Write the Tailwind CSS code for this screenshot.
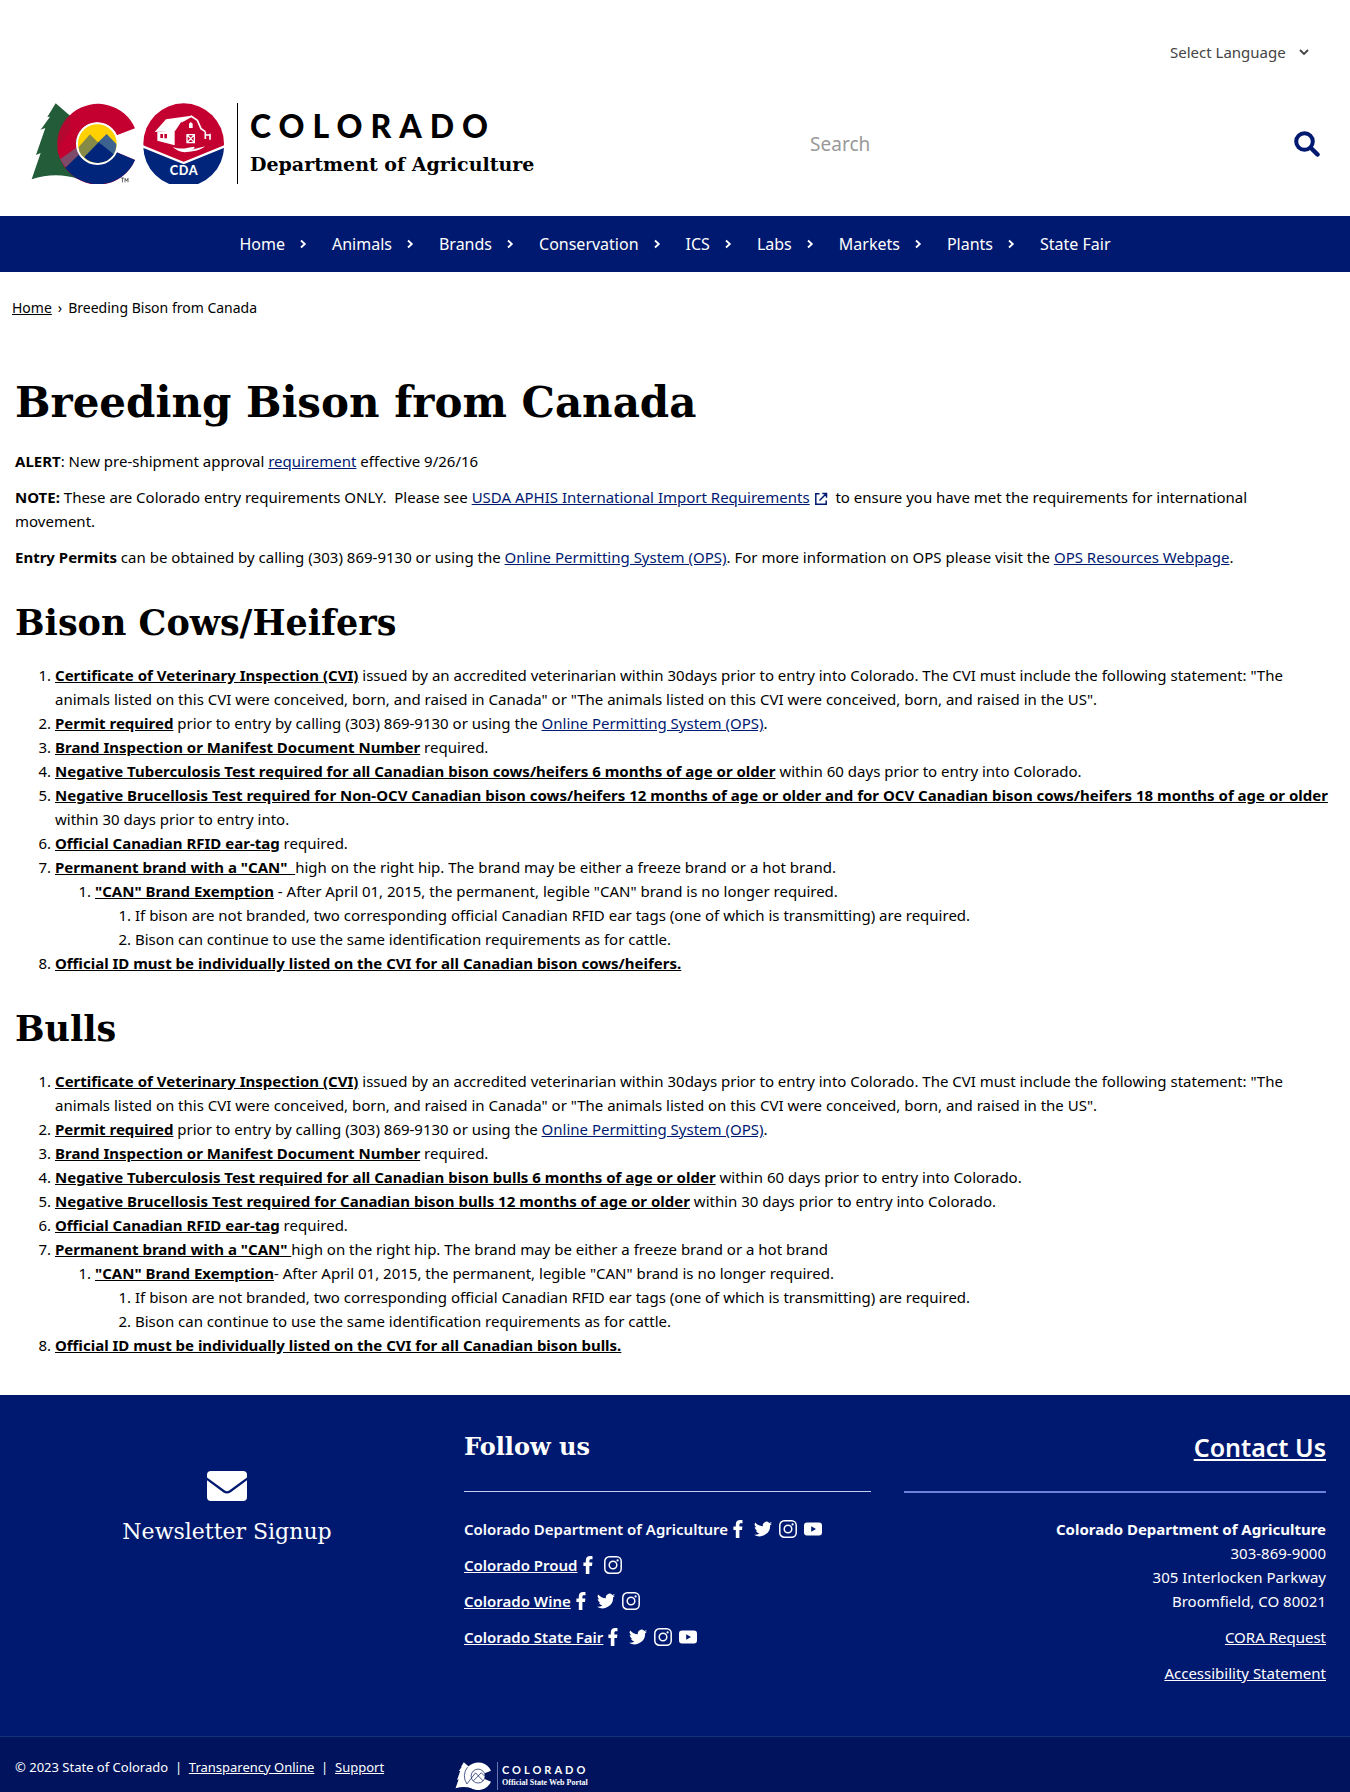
<!DOCTYPE html>
<html lang="en">
<head>
<meta charset="utf-8">
<meta name="viewport" content="width=device-width, initial-scale=1">
<title>Breeding Bison from Canada | Department of Agriculture</title>
<script src="https://cdn.jsdelivr.net/npm/@tailwindcss/browser@4"></script>
</head>
<body class="bg-white text-black font-['Noto_Sans',sans-serif] text-[15px] leading-6">

<!-- Shared icons -->
<svg class="hidden" aria-hidden="true">
  <symbol id="chev" viewBox="0 0 8 10"><path d="M2 1.5 5.8 5 2 8.5" fill="none" stroke="currentColor" stroke-width="1.8"/></symbol>
  <symbol id="fb" viewBox="0 0 18 18"><path d="M6.800 18V10H4.400V6.600h2.400V4.400C6.800 1.600 8.600.1 11.200.1c1.100 0 2 .1 2.300.1v3.100h-1.600c-1.200 0-1.500.6-1.500 1.500v1.800h3l-.4 3.400h-2.600V18z" fill="currentColor"/></symbol>
  <symbol id="tw" viewBox="0 0 24 24"><path d="M24 4.6c-.9.4-1.8.7-2.8.8 1-.6 1.8-1.6 2.2-2.7-1 .6-2 1-3.1 1.2a4.9 4.9 0 0 0-8.4 4.5C7.7 8.200 4.100 6.200 1.700 3.200a4.900 4.900 0 0 0 1.500 6.600c-.8 0-1.600-.2-2.200-.6v.1c0 2.400 1.700 4.400 3.900 4.800-.7.2-1.500.2-2.200.1.600 2 2.400 3.400 4.600 3.400A9.900 9.900 0 0 1 0 19.500 14 14 0 0 0 21.500 7.100c1-.7 1.800-1.600 2.500-2.500z" fill="currentColor"/></symbol>
  <symbol id="ig" viewBox="0 0 18 18"><rect x=".8" y=".8" width="16.400" height="16.400" rx="4.500" fill="none" stroke="currentColor" stroke-width="1.500"/><circle cx="9" cy="9" r="3.800" fill="none" stroke="currentColor" stroke-width="1.500"/><circle cx="13.600" cy="4.400" r="1.100" fill="currentColor"/></symbol>
  <symbol id="yt" viewBox="0 0 18 18"><path fill-rule="evenodd" d="M3 2.500h12a3 3 0 0 1 3 3v7a3 3 0 0 1-3 3H3a3 3 0 0 1-3-3v-7a3 3 0 0 1 3-3zM7.200 6.300v5.400L12 9z" fill="currentColor"/></symbol>
</svg>

<header class="pt-10">
  <div class="flex justify-end pr-10">
    <div class="relative flex items-center">
      <select aria-label="Select Language" class="appearance-none bg-transparent pr-6 leading-6 text-[#444]"><option>Select Language</option></select>
      <svg class="pointer-events-none absolute right-0 h-3 w-3 text-[#444]" viewBox="0 0 12 12"><path d="M2 4l4 4 4-4" fill="none" stroke="currentColor" stroke-width="1.800"/></svg>
    </div>
  </div>
  <div class="mt-[39px] flex items-center pb-8 pl-[30px] pr-[30px]">
    <a href="#" class="flex items-center" aria-label="Colorado Department of Agriculture">
      <svg class="h-[81px] w-[195px]" viewBox="30 26 585 243">
        <path d="M107 27 82 68l8-1-28 39 14-5-28 81 14-6-27 79q72-24 140-1l10-160z" fill="#235c39"/>
        <path d="M345 102A121 121 0 1 0 345 197L290 174A64 64 0 1 1 290 123Z" fill="#c3002f"/>
        <path d="M140 70A121 121 0 0 0 112 165L150 110 152 62z" fill="#a80f33" opacity=".5"/>
        <path d="M112 166 172 150 186 190 134 217A121 121 0 0 1 114 176z" fill="#c3002f"/>
        <path d="M120 195 176 155 190 195 136 219z" fill="#7d4a6a"/>
        <path d="M136 220 182 176Q232 240 290 174L345 197A121 121 0 0 1 136 220z" fill="#00257a"/>
        <circle cx="232" cy="148" r="61" fill="#ffd100" stroke="#fff" stroke-width="6"/>
        <path d="M176 158 210 120 238 148 220 180 190 188Q176 175 176 158z" fill="#858b47"/>
        <path d="M232 146 260 119 289 149Q290 170 276 186L240 170z" fill="#3c628f"/>
        <path d="M192 189 236 144 281 180A58 58 0 0 1 192 189z" fill="#00257a"/>
        <path d="M303 251h9m-4.500 0v13M315 264v-12l4.500 8 4.500-8v12" fill="none" stroke="#222" stroke-width="2"/>
        <circle cx="491" cy="148" r="121" fill="#c3002f"/>
        <path d="M370 156 491 206 612 156A121 121 0 0 1 370 156z" fill="#00257a"/>
        <path d="M368 156 491 206 614 156" fill="none" stroke="#fff" stroke-width="7"/>
        <path d="M438 75 514 64 484 82 466 109 404 113 412 104z" fill="#fff"/>
        <path d="M412 113 464 107v46l-52-14z" fill="#fff"/>
        <path d="M421 119h8v12h-8zm12 0h8v13h-8z" fill="#c3002f"/>
        <path d="M484 82 514 66 532 78 543 103 556 112M556 134v-22M556 122h14M570 118v18" fill="none" stroke="#fff" stroke-width="5"/>
        <path d="M507 101V88l5-5 6 5v13z" fill="#fff"/>
        <path d="M501 121h22v24h-22zM501 121l22 24m0-24-22 24" fill="none" stroke="#fff" stroke-width="4"/>
        <path d="M458 158q22 8 46 2l18-3q6 4-8 9l42-10q-20 16-62 18-20-2-36-16z" fill="#fff"/>
        <text x="492" y="243" text-anchor="middle" class="fill-white font-[Lato,sans-serif] text-[38px] font-black tracking-[2px]">CDA</text>
      </svg>
      <span class="ml-3 block h-[81px] w-px bg-black"></span>
      <span class="ml-3 flex flex-col gap-2 whitespace-nowrap">
        <span class="font-[Lato,sans-serif] text-[32px] font-black leading-8 tracking-[8px]">COLORADO</span>
        <span class="font-['DejaVu_Serif',serif] text-[19px] font-bold leading-7">Department of Agriculture</span>
      </span>
    </a>
    <form class="ml-auto flex w-[41%] items-center" role="search">
      <input type="search" aria-label="Search" placeholder="Search" class="h-10 min-w-0 flex-1 bg-transparent pl-[19px] text-[19px] placeholder:text-[#999]">
      <button type="submit" aria-label="Search" class="text-[#001970]">
        <svg class="h-[26px] w-[26px]" viewBox="0 0 26 26"><circle cx="10.500" cy="10.500" r="8.300" fill="none" stroke="currentColor" stroke-width="4"/><path d="m17 17 6.500 6.500" stroke="currentColor" stroke-width="4.500" stroke-linecap="round"/></svg>
      </button>
    </form>
  </div>
</header>

<nav class="bg-[#001970] text-base text-white" aria-label="Main">
  <ul class="flex h-14 items-center justify-center gap-[25px] whitespace-nowrap">
    <li class="flex items-center gap-[14px]"><a href="#">Home</a><svg class="h-[10px] w-2"><use href="#chev"/></svg></li>
    <li class="flex items-center gap-[14px]"><a href="#">Animals</a><svg class="h-[10px] w-2"><use href="#chev"/></svg></li>
    <li class="flex items-center gap-[14px]"><a href="#">Brands</a><svg class="h-[10px] w-2"><use href="#chev"/></svg></li>
    <li class="flex items-center gap-[14px]"><a href="#">Conservation</a><svg class="h-[10px] w-2"><use href="#chev"/></svg></li>
    <li class="flex items-center gap-[14px]"><a href="#">ICS</a><svg class="h-[10px] w-2"><use href="#chev"/></svg></li>
    <li class="flex items-center gap-[14px]"><a href="#">Labs</a><svg class="h-[10px] w-2"><use href="#chev"/></svg></li>
    <li class="flex items-center gap-[14px]"><a href="#">Markets</a><svg class="h-[10px] w-2"><use href="#chev"/></svg></li>
    <li class="flex items-center gap-[14px]"><a href="#">Plants</a><svg class="h-[10px] w-2"><use href="#chev"/></svg></li>
    <li><a href="#">State Fair</a></li>
  </ul>
</nav>

<nav class="px-3 pt-6 text-sm leading-6" aria-label="Breadcrumb">
  <a href="#" class="underline">Home</a><span class="px-1.5">›</span><span>Breeding Bison from Canada</span>
</nav>

<main class="px-[15px] pb-[38px] pt-[55px]">
  <h1 class="font-['DejaVu_Serif',serif] text-[42px] font-bold leading-[56px]">Breeding Bison from Canada</h1>
  <div class="mt-[18px] flex flex-col gap-3">
    <p><strong>ALERT</strong>: New pre-shipment approval <a href="#" class="text-[#001970] underline">requirement</a> effective 9/26/16</p>
    <p><strong>NOTE:</strong> These are Colorado entry requirements ONLY.&nbsp; Please see <a href="#" class="text-[#001970] underline">USDA APHIS International Import Requirements</a> <svg class="inline-block h-[14px] w-[14px] align-[-3px] text-[#001970]" viewBox="0 0 14 14"><path d="M5.500 1.800H1.800v10.400h10.400V8.500M8.300 1.500h4.200v4.200M12.200 1.800 5.500 8.500" fill="none" stroke="currentColor" stroke-width="1.500"/></svg>&nbsp; to ensure you have met the requirements for international<br>movement.</p>
    <p><strong>Entry Permits</strong> can be obtained by calling (303) 869-9130 or using the <a href="#" class="text-[#001970] underline">Online Permitting System (OPS)</a>. For more information on OPS please visit the <a href="#" class="text-[#001970] underline">OPS Resources Webpage</a>.</p>
  </div>

  <h2 class="mt-[30px] font-['DejaVu_Serif',serif] text-[35px] font-bold leading-[48px]">Bison Cows/Heifers</h2>
  <ol class="mt-4 list-decimal pl-10">
    <li><strong class="underline">Certificate of Veterinary Inspection (CVI)</strong> issued by an accredited veterinarian within 30days prior to entry into Colorado. The CVI must include the following statement: "The<br>animals listed on this CVI were conceived, born, and raised in Canada" or "The animals listed on this CVI were conceived, born, and raised in the US".</li>
    <li><strong class="underline">Permit required</strong> prior to entry by calling (303) 869-9130 or using the <a href="#" class="text-[#001970] underline">Online Permitting System (OPS)</a>.</li>
    <li><strong class="underline">Brand Inspection or Manifest Document Number</strong> required.</li>
    <li><strong class="underline">Negative Tuberculosis Test required for all Canadian bison cows/heifers 6 months of age or older</strong> within 60 days prior to entry into Colorado.</li>
    <li><strong class="underline">Negative Brucellosis Test required for Non-OCV Canadian bison cows/heifers 12 months of age or older and for OCV Canadian bison cows/heifers 18 months of age or older</strong> within 30 days prior to entry into.</li>
    <li><strong class="underline">Official Canadian RFID ear-tag</strong> required.</li>
    <li><strong class="underline">Permanent brand with a "CAN"&nbsp; </strong>high on the right hip. The brand may be either a freeze brand or a hot brand.
      <ol class="list-decimal pl-10">
        <li><strong class="underline">"CAN" Brand Exemption</strong> - After April 01, 2015, the permanent, legible "CAN" brand is no longer required.
          <ol class="list-decimal pl-10">
            <li>If bison are not branded, two corresponding official Canadian RFID ear tags (one of which is transmitting) are required.</li>
            <li>Bison can continue to use the same identification requirements as for cattle.</li>
          </ol>
        </li>
      </ol>
    </li>
    <li><strong class="underline">Official ID must be individually listed on the CVI for all Canadian bison cows/heifers.</strong></li>
  </ol>

  <h2 class="mt-[30px] font-['DejaVu_Serif',serif] text-[35px] font-bold leading-[48px]">Bulls</h2>
  <ol class="mt-4 list-decimal pl-10">
    <li><strong class="underline">Certificate of Veterinary Inspection (CVI)</strong> issued by an accredited veterinarian within 30days prior to entry into Colorado. The CVI must include the following statement: "The<br>animals listed on this CVI were conceived, born, and raised in Canada" or "The animals listed on this CVI were conceived, born, and raised in the US".</li>
    <li><strong class="underline">Permit required</strong> prior to entry by calling (303) 869-9130 or using the <a href="#" class="text-[#001970] underline">Online Permitting System (OPS)</a>.</li>
    <li><strong class="underline">Brand Inspection or Manifest Document Number</strong> required.</li>
    <li><strong class="underline">Negative Tuberculosis Test required for all Canadian bison bulls 6 months of age or older</strong> within 60 days prior to entry into Colorado.</li>
    <li><strong class="underline">Negative Brucellosis Test required for Canadian bison bulls 12 months of age or older</strong> within 30 days prior to entry into Colorado.</li>
    <li><strong class="underline">Official Canadian RFID ear-tag</strong> required.</li>
    <li><strong class="underline">Permanent brand with a "CAN" </strong>high on the right hip. The brand may be either a freeze brand or a hot brand
      <ol class="list-decimal pl-10">
        <li><strong class="underline">"CAN" Brand Exemption</strong>- After April 01, 2015, the permanent, legible "CAN" brand is no longer required.
          <ol class="list-decimal pl-10">
            <li>If bison are not branded, two corresponding official Canadian RFID ear tags (one of which is transmitting) are required.</li>
            <li>Bison can continue to use the same identification requirements as for cattle.</li>
          </ol>
        </li>
      </ol>
    </li>
    <li><strong class="underline">Official ID must be individually listed on the CVI for all Canadian bison bulls.</strong></li>
  </ol>
</main>

<footer class="bg-[#001970] text-white">
  <div class="grid grid-cols-3 pb-[51px] pt-8">
    <div class="flex flex-col items-center pl-1 pt-11">
      <svg class="h-[30px] w-10" viewBox="0 0 40 30"><path d="M4 0h32a4 4 0 0 1 4 4v2.500L22.500 19.300q-2.500 1.800-5 0L0 6.500V4a4 4 0 0 1 4-4z" fill="#fff"/><path d="M0 9.300 16.200 21.300q3.800 2.600 7.600 0L40 9.300V26a4 4 0 0 1-4 4H4a4 4 0 0 1-4-4z" fill="#fff"/></svg>
      <a href="#" class="mt-[13px] font-['DejaVu_Serif',serif] text-[22px] leading-9">Newsletter Signup</a>
    </div>
    <div class="pl-[14px] pr-[29px]">
      <h3 class="font-['DejaVu_Serif',serif] text-2xl font-bold leading-10">Follow us</h3>
      <hr class="mt-6 border-t border-[#c5cdf0]">
      <ul class="mt-[25px] flex flex-col gap-3 font-semibold">
        <li class="flex items-center gap-[7px]"><span>Colorado Department of Agriculture</span><a href="#" aria-label="Facebook"><svg class="-ml-1.5 h-[18px] w-[18px]"><use href="#fb"/></svg></a><a href="#" aria-label="Twitter"><svg class="h-[18px] w-[18px]"><use href="#tw"/></svg></a><a href="#" aria-label="Instagram"><svg class="h-[18px] w-[18px]"><use href="#ig"/></svg></a><a href="#" aria-label="YouTube"><svg class="h-[18px] w-[18px]"><use href="#yt"/></svg></a></li>
        <li class="flex items-center gap-[7px]"><a href="#" class="underline">Colorado Proud</a><a href="#" aria-label="Facebook"><svg class="-ml-1.5 h-[18px] w-[18px]"><use href="#fb"/></svg></a><a href="#" aria-label="Instagram"><svg class="h-[18px] w-[18px]"><use href="#ig"/></svg></a></li>
        <li class="flex items-center gap-[7px]"><a href="#" class="underline">Colorado Wine</a><a href="#" aria-label="Facebook"><svg class="-ml-1.5 h-[18px] w-[18px]"><use href="#fb"/></svg></a><a href="#" aria-label="Twitter"><svg class="h-[18px] w-[18px]"><use href="#tw"/></svg></a><a href="#" aria-label="Instagram"><svg class="h-[18px] w-[18px]"><use href="#ig"/></svg></a></li>
        <li class="flex items-center gap-[7px]"><a href="#" class="underline">Colorado State Fair</a><a href="#" aria-label="Facebook"><svg class="-ml-1.5 h-[18px] w-[18px]"><use href="#fb"/></svg></a><a href="#" aria-label="Twitter"><svg class="h-[18px] w-[18px]"><use href="#tw"/></svg></a><a href="#" aria-label="Instagram"><svg class="h-[18px] w-[18px]"><use href="#ig"/></svg></a><a href="#" aria-label="YouTube"><svg class="h-[18px] w-[18px]"><use href="#yt"/></svg></a></li>
      </ul>
    </div>
    <div class="pl-1 pr-6 text-right">
      <h3 class="text-[25px] font-semibold leading-10"><a href="#" class="underline">Contact Us</a></h3>
      <hr class="mt-6 border-t-2 border-[#6c82d8]">
      <address class="mt-6 flex flex-col not-italic">
        <strong>Colorado Department of Agriculture</strong>
        <span>303-869-9000</span>
        <span>305 Interlocken Parkway</span>
        <span>Broomfield, CO 80021</span>
      </address>
      <p class="mt-3"><a href="#" class="underline">CORA Request</a></p>
      <p class="mt-3"><a href="#" class="underline">Accessibility Statement</a></p>
    </div>
  </div>
  <div class="flex items-start border-t border-[#17307c] bg-[#00135c] px-[15px] pb-1 pt-[18px]">
    <p class="w-[440px] text-[13px] leading-6">© 2023 State of Colorado &nbsp;|&nbsp; <a href="#" class="underline">Transparency Online</a> &nbsp;|&nbsp; <a href="#" class="underline">Support</a></p>
    <a href="#" class="mt-[7px] flex h-7 items-center" aria-label="Colorado Official State Web Portal">
      <svg class="h-7 w-9" viewBox="30 26 315 243">
        <path d="M107 27 82 68l8-1-28 39 14-5-28 81 14-6-27 79q72-24 140-1l10-160z" fill="#fff"/>
        <path d="M345 102A121 121 0 1 0 345 197L290 174 290 123z" fill="#fff"/>
        <circle cx="232" cy="148" r="61" fill="#fff" stroke="#00135c" stroke-width="6"/>
        <path d="M140 70A121 121 0 0 0 134 217L210 120 275 190M192 189 260 119 289 149" fill="none" stroke="#00135c" stroke-width="6"/>
      </svg>
      <span class="ml-1.5 h-7 w-px bg-[#6676b0]"></span>
      <span class="ml-1 flex flex-col whitespace-nowrap">
        <span class="font-[Lato,sans-serif] text-[11px] font-bold leading-[14px] tracking-[3px]">COLORADO</span>
        <span class="font-['Liberation_Serif',serif] text-[8px] font-bold leading-3">Official State Web Portal</span>
      </span>
    </a>
  </div>
</footer>
</body>
</html>
